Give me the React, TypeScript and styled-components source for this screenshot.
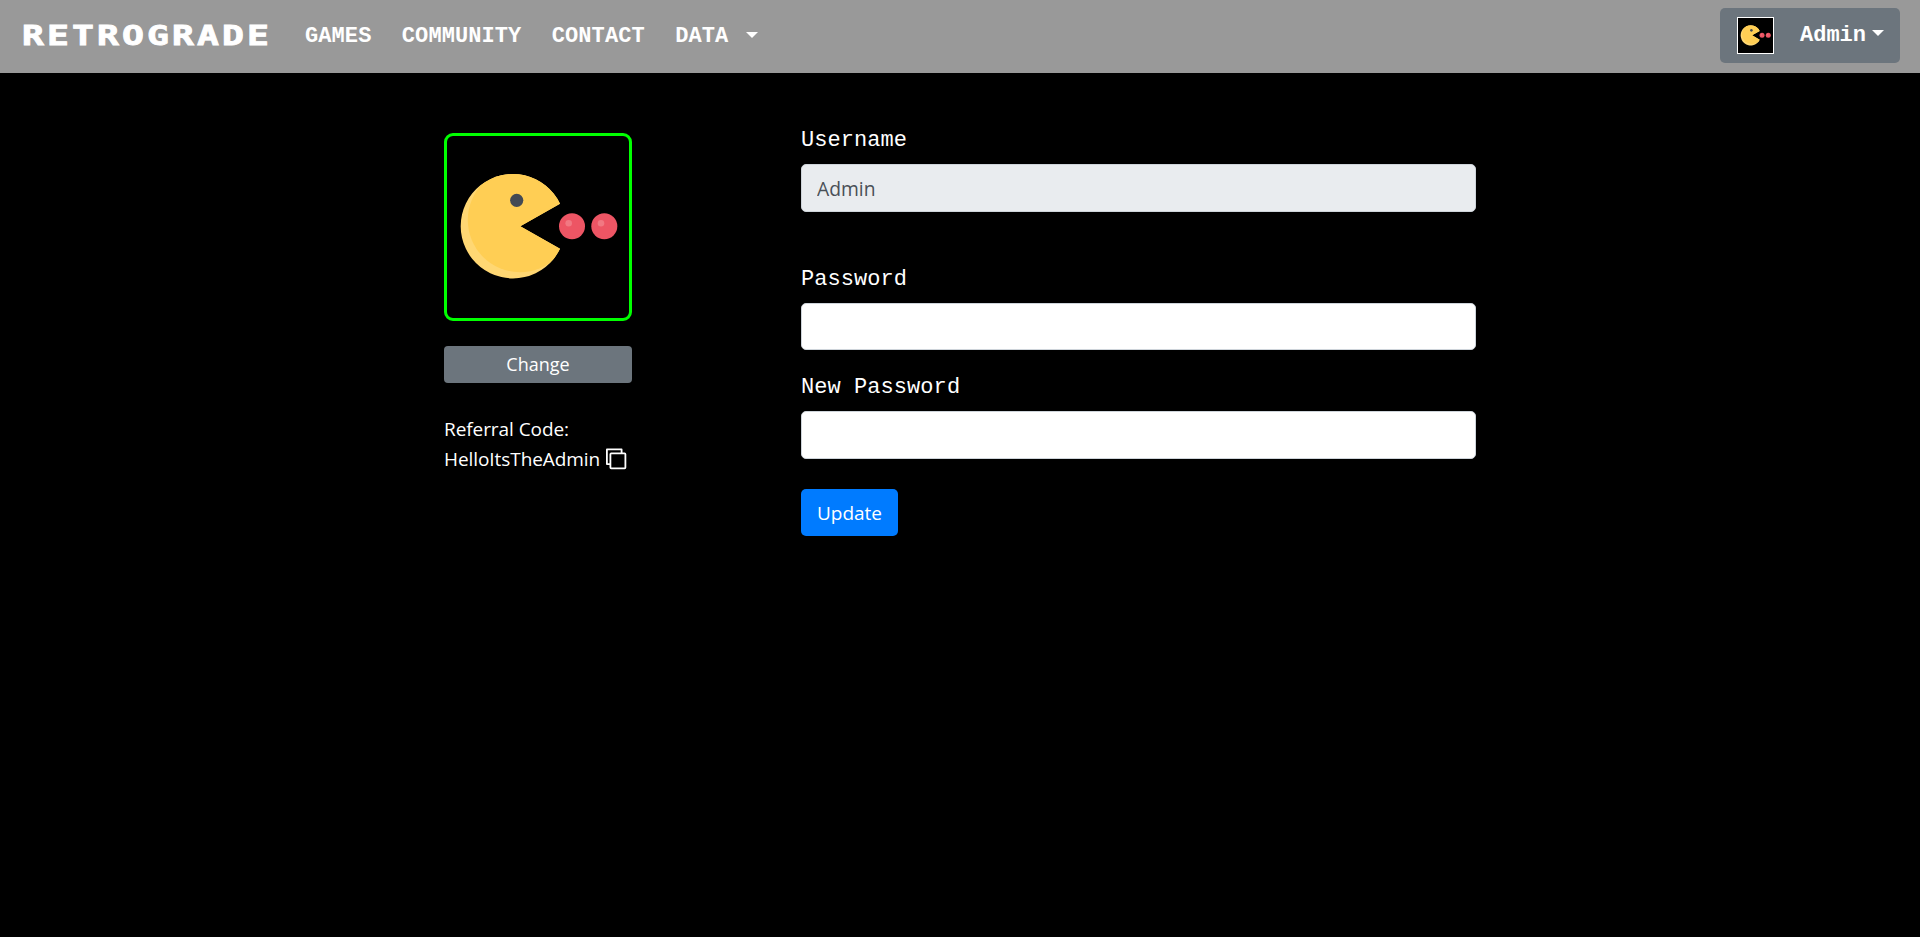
import React from 'react';
import styled, { createGlobalStyle } from 'styled-components';

const GlobalStyle = createGlobalStyle`
  *, *::before, *::after { box-sizing: border-box; }
  html, body { margin: 0; background: #000; }
  body {
    min-height: 100vh;
    color: #fff;
    font-family: "Open Sans", "Noto Sans", sans-serif;
    font-size: 19px;
    line-height: 30px;
  }
`;

const mono = '"Liberation Mono", monospace';

const Navbar = styled.nav`
  display: flex;
  align-items: center;
  height: 73px;
  padding: 0 20px 2px 22px;
  background: #999;
`;

const Brand = styled.a`
  width: 282px;
  font: bold 26px/32px "DejaVu Sans Mono", monospace;
  letter-spacing: 2.2px;
  white-space: nowrap;
  -webkit-text-stroke: 0.8px #fff;
  transform: scaleX(1.4);
  transform-origin: left center;
  margin-right: 1px;
`;

const NavLinks = styled.div`
  display: flex;
  align-items: center;
  gap: 30.4px;
  flex: 1;
`;

const NavLink = styled.a`
  display: flex;
  align-items: center;
  gap: 18px;
  padding-top: 2px;
  font: bold 22px/30px ${mono};
  letter-spacing: 0.08px;
`;

const Caret = styled.span`
  width: 12px;
  margin-bottom: 3px;
  border: 6px solid transparent;
  border-top-color: #fff;
  border-bottom: 0;
`;

const UserButton = styled.button`
  display: flex;
  align-items: center;
  width: 180px;
  height: 55px;
  padding: 0 16px 0 17px;
  border: 0;
  border-radius: 5px;
  background: #6c757d;
  color: #fff;
  font: bold 22px/30px ${mono};
`;

const SmallAvatar = styled.span`
  display: block;
  width: 37px;
  height: 37px;
  margin-right: 26px;
  border: 1px solid #fff;
  background: #000;
`;

const UserName = styled.span`
  margin-right: 6px;
`;

const UserCaret = styled(Caret)`
  margin-bottom: 5px;
`;

const Main = styled.main`
  display: flex;
  align-items: flex-start;
  gap: 169px;
  padding: 51px 444px 0;
`;

const Profile = styled.aside`
  width: 188px;
  padding-top: 9px;
`;

const AvatarFrame = styled.div`
  width: 188px;
  height: 188px;
  border: 3px solid #0f0;
  border-radius: 9px;
`;

const Button = styled.button<{ $primary?: boolean }>`
  display: block;
  width: ${p => (p.$primary ? '97px' : '100%')};
  height: ${p => (p.$primary ? '47px' : '37px')};
  margin-top: ${p => (p.$primary ? '30px' : '25px')};
  padding: ${p => (p.$primary ? '0' : '0 0 2px')};
  border: 0;
  border-radius: ${p => (p.$primary ? '5px' : '4px')};
  background: ${p => (p.$primary ? '#007bff' : '#6c757d')};
  color: #fff;
  font: ${p => (p.$primary ? '19px' : '18px')}/30px "Open Sans", sans-serif;
`;

const Referral = styled.div`
  margin-top: 31px;
  letter-spacing: -0.07px;
  white-space: nowrap;
`;

const CodeRow = styled.div`
  display: flex;
  align-items: center;
  gap: 5px;
`;

const Form = styled.form`
  width: 675px;
`;

const Field = styled.div<{ $gap?: number }>`
  margin-bottom: ${p => p.$gap ?? 0}px;
`;

const Label = styled.label`
  display: block;
  padding-top: 2px;
  margin-bottom: 8px;
  font: 22px/30px ${mono};
  letter-spacing: 0.06px;
`;

const Input = styled.input<{ $height?: number }>`
  display: block;
  width: 100%;
  height: ${p => p.$height ?? 48}px;
  padding: 0 15px;
  border: 1px solid #ced4da;
  border-radius: 5px;
  background: #fff;
  color: #495057;
  font: 19.3px/30px "Open Sans", sans-serif;
  &:disabled { background: #e9ecef; }
`;

const Drawing = styled.svg`
  display: block;
`;

const body = 'M116 70.7 A52.2 52.2 0 1 0 116 115.7 L76.3 93.2 Z';

function Pacman({ size, id }: { size: number; id: string }) {
  return (
    <Drawing width={size} height={size} viewBox="3 3 182 182">
      <clipPath id={id}><path d={body} /></clipPath>
      <path d={body} fill="#ffd773" />
      <circle cx="76" cy="87" r="52.2" fill="#ffce54" clipPath={`url(#${id})`} />
      <circle cx="72.7" cy="67.3" r="6.6" fill="#434a54" />
      {[128, 160.3].map(x => (
        <g key={x}>
          <circle cx={x} cy="93.3" r="13" fill="#ed5564" />
          <circle cx={x - 3.3} cy="90.2" r="3.3" fill="#f17882" />
        </g>
      ))}
    </Drawing>
  );
}

function CopyIcon() {
  return (
    <Drawing width="22" height="22" viewBox="0 0 22 22" fill="none" stroke="#fff" strokeWidth="1.8">
      <path d="M5.4 16.1H1.9V1.4H16.6V5.4" strokeLinejoin="round" />
      <rect x="5.4" y="5.4" width="15" height="15" rx="0.8" />
    </Drawing>
  );
}

export default function App() {
  return (
    <>
      <GlobalStyle />
      <Navbar>
        <Brand>RETROGRADE</Brand>
        <NavLinks>
          <NavLink>GAMES</NavLink>
          <NavLink>COMMUNITY</NavLink>
          <NavLink>CONTACT</NavLink>
          <NavLink>DATA <Caret /></NavLink>
        </NavLinks>
        <UserButton>
          <SmallAvatar><Pacman size={35} id="small-body" /></SmallAvatar>
          <UserName>Admin</UserName>
          <UserCaret />
        </UserButton>
      </Navbar>
      <Main>
        <Profile>
          <AvatarFrame><Pacman size={182} id="large-body" /></AvatarFrame>
          <Button>Change</Button>
          <Referral>
            <div>Referral Code:</div>
            <CodeRow>HelloItsTheAdmin <CopyIcon /></CodeRow>
          </Referral>
        </Profile>
        <Form>
          <Field $gap={51}>
            <Label>Username</Label>
            <Input disabled defaultValue="Admin" />
          </Field>
          <Field $gap={21}>
            <Label>Password</Label>
            <Input type="password" $height={47} />
          </Field>
          <Field>
            <Label>New Password</Label>
            <Input type="password" />
          </Field>
          <Button type="button" $primary>Update</Button>
        </Form>
      </Main>
    </>
  );
}
